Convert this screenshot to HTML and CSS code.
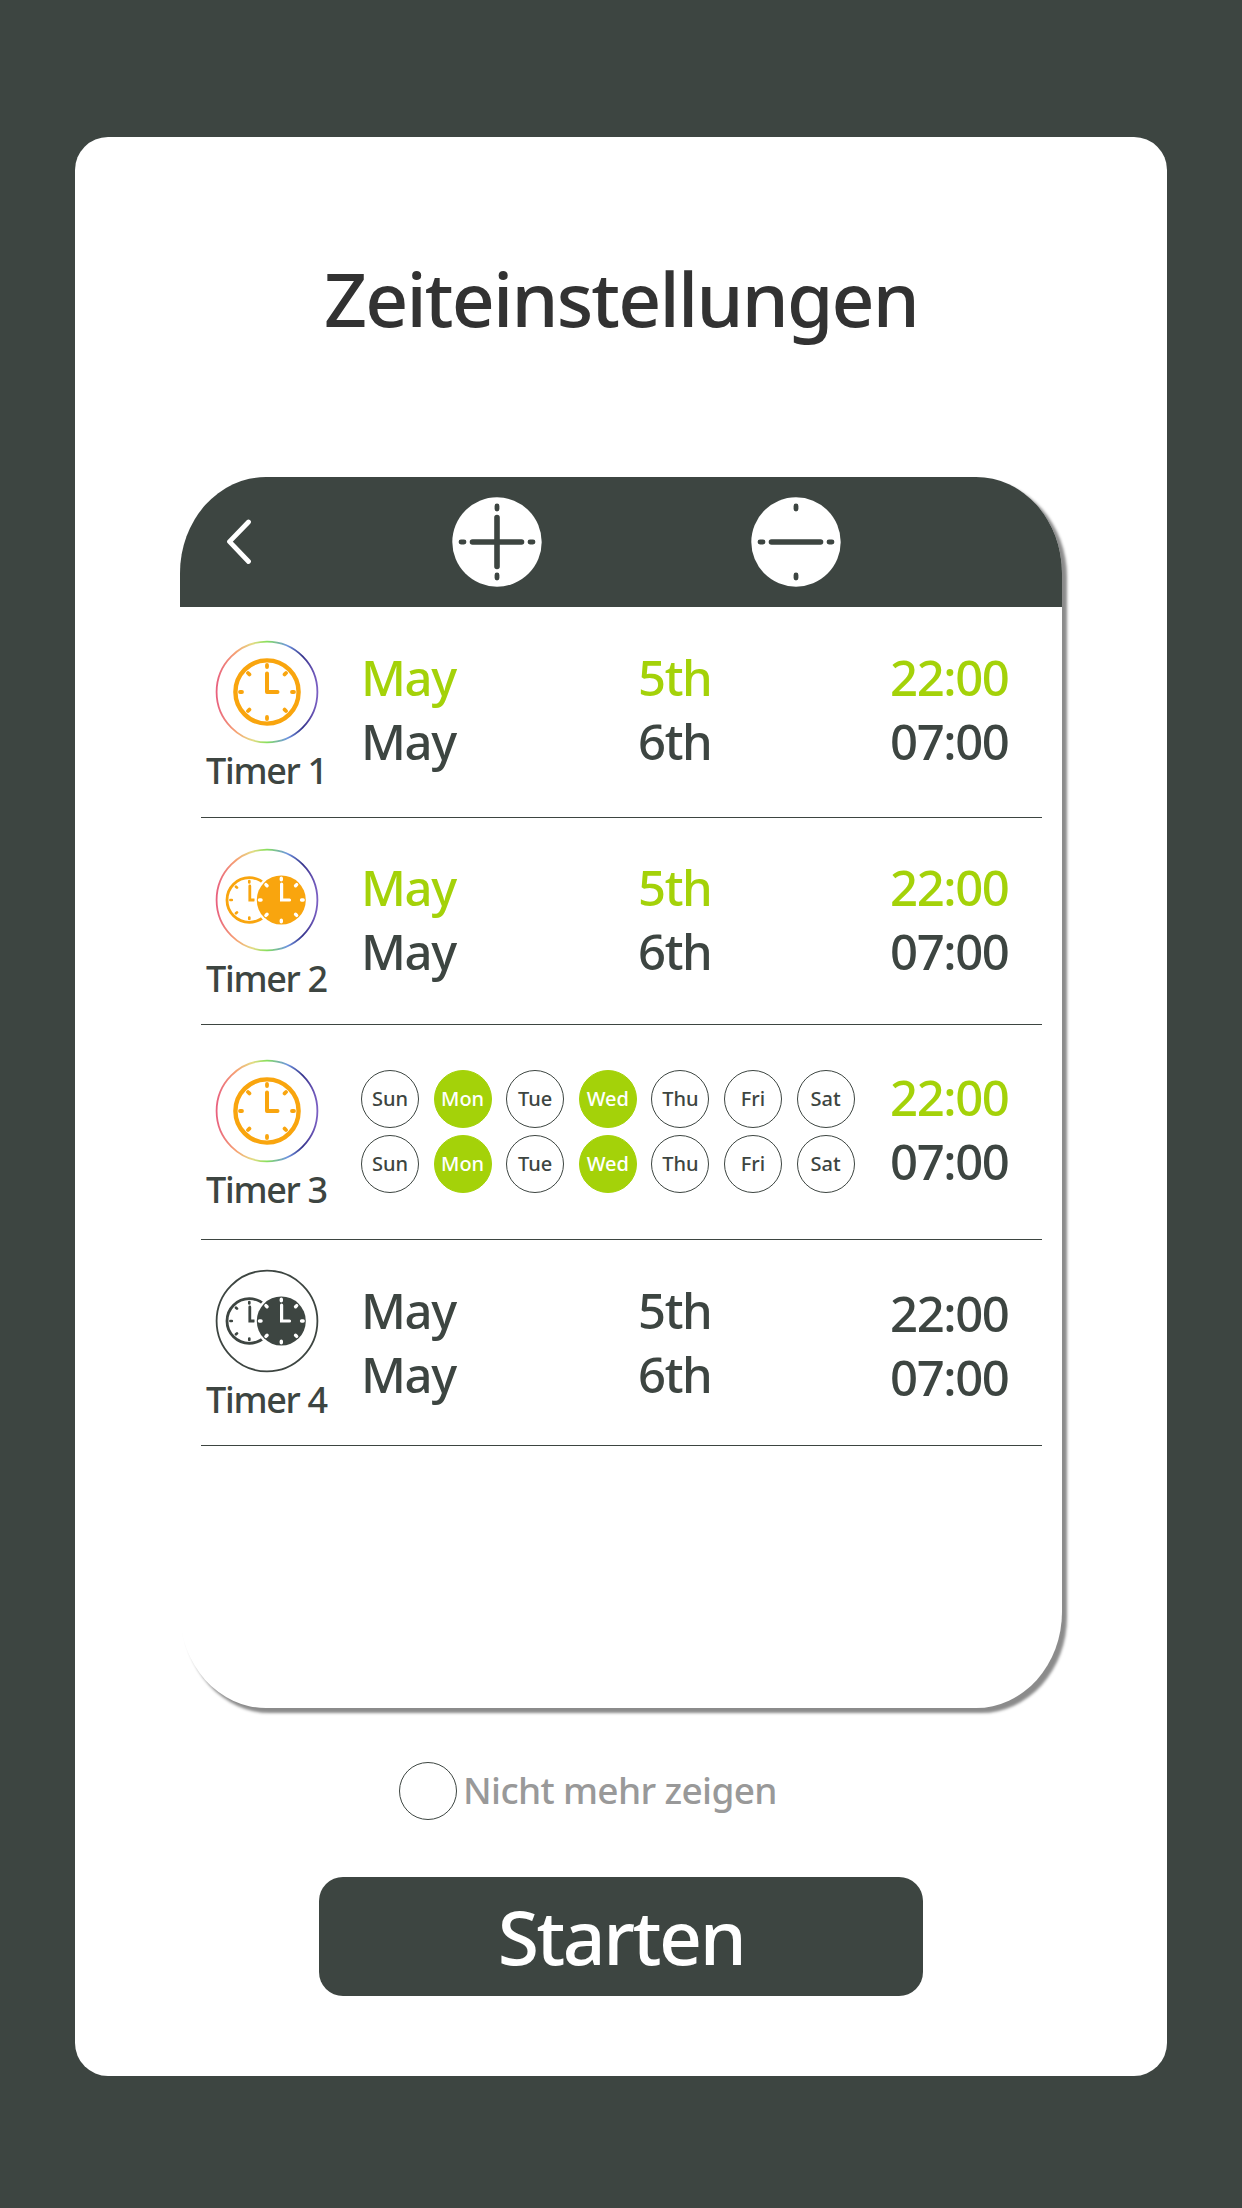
FILE: index.html
```html
<!DOCTYPE html>
<html lang="de">
  <head>
    <meta charset="UTF-8" />
    <meta name="viewport" content="width=device-width, initial-scale=1.0" />
    <title>Zeiteinstellungen</title>
    <link rel="stylesheet" href="styles.css">
  </head>
  <body>
    <!-- shared icons -->
    <svg class="defs" width="0" height="0">
      <defs>
        <linearGradient id="rainbow" gradientUnits="userSpaceOnUse" x1="-51" y1="0" x2="51" y2="0">
          <stop offset="0" stop-color="#e8607f" />
          <stop offset="0.2" stop-color="#f6a373" />
          <stop offset="0.36" stop-color="#e4dc86" />
          <stop offset="0.5" stop-color="#86e05c" />
          <stop offset="0.7" stop-color="#6f95e0" />
          <stop offset="0.85" stop-color="#36348c" />
          <stop offset="1" stop-color="#7c60c4" />
        </linearGradient>
        <g id="ticks" stroke-linecap="round">
          <path d="M0 -27V-25M0 27V25M-27 0H-25M27 0H25M-19 -19L-17.6 -17.6M19 -19L17.6 -17.6M-19 19L-17.6 17.6M19 19L17.6 17.6" />
        </g>
        <symbol id="clock" viewBox="-52 -52 104 104">
          <circle r="31.6" fill="none" stroke="currentColor" stroke-width="4.4" />
          <use href="#ticks" stroke="currentColor" stroke-width="3.8" />
          <path d="M0 -18.5V0H10.5" fill="none" stroke="currentColor" stroke-width="4" stroke-linecap="round" stroke-linejoin="round" />
        </symbol>
        <symbol id="clocks" viewBox="-52 -52 104 104">
          <circle cx="-17.7" r="22.3" fill="none" stroke="currentColor" stroke-width="2.8" />
          <g transform="translate(-17.7 0) scale(0.7)">
            <use href="#ticks" stroke="currentColor" stroke-width="3.8" />
          </g>
          <path d="M-17.2 -14V0H-13" fill="none" stroke="currentColor" stroke-width="2.8" stroke-linecap="round" />
          <circle cx="14.3" r="26.8" fill="#fff" />
          <circle cx="14.3" r="24.5" fill="currentColor" />
          <g transform="translate(14.3 0) scale(0.81)">
            <use href="#ticks" stroke="#fff" stroke-width="4.2" />
          </g>
          <path d="M14.6 -16V0H22.5" fill="none" stroke="#fff" stroke-width="3.2" stroke-linecap="round" />
        </symbol>
      </defs>
    </svg>

    <main class="card">
      <h1>Zeiteinstellungen</h1>

      <section class="panel">
        <header class="bar">
          <svg class="back" viewBox="0 0 26 46">
            <path d="M22.5 3L3.5 22.7L22.5 42.5" />
          </svg>
          <svg class="round add" viewBox="-45 -45 90 90">
            <circle r="44.7" />
            <path class="hand" d="M-24.5 0H24.5M0 -24.5V24.5" />
            <path class="mark" d="M-36 0H-33M36 0H33M0 -36V-33M0 36V33" />
          </svg>
          <svg class="round remove" viewBox="-45 -45 90 90">
            <circle r="44.7" />
            <path class="hand" d="M-24.5 0H24.5" />
            <path class="mark" d="M-36 0H-33M36 0H33M0 -36V-33M0 36V33" />
          </svg>
        </header>

        <div class="timer timer-1">
          <div class="label">
            <svg class="icon" viewBox="-52 -52 104 104">
              <circle class="ring" r="50.4" />
              <use href="#clock" x="-52" y="-52" width="104" height="104" />
            </svg>
            <span>Timer 1</span>
          </div>
          <div class="month"><p class="on">May</p><p>May</p></div>
          <div class="day"><p class="on">5th</p><p>6th</p></div>
          <div class="time"><p class="on">22:00</p><p>07:00</p></div>
        </div>

        <div class="timer timer-2">
          <div class="label">
            <svg class="icon" viewBox="-52 -52 104 104">
              <circle class="ring" r="50.4" />
              <use href="#clocks" x="-52" y="-52" width="104" height="104" />
            </svg>
            <span>Timer 2</span>
          </div>
          <div class="month"><p class="on">May</p><p>May</p></div>
          <div class="day"><p class="on">5th</p><p>6th</p></div>
          <div class="time"><p class="on">22:00</p><p>07:00</p></div>
        </div>

        <div class="timer timer-3">
          <div class="label">
            <svg class="icon" viewBox="-52 -52 104 104">
              <circle class="ring" r="50.4" />
              <use href="#clock" x="-52" y="-52" width="104" height="104" />
            </svg>
            <span>Timer 3</span>
          </div>
          <div class="week">
            <span>Sun</span><span class="picked">Mon</span><span>Tue</span><span class="picked">Wed</span><span>Thu</span><span>Fri</span><span>Sat</span>
            <span>Sun</span><span class="picked">Mon</span><span>Tue</span><span class="picked">Wed</span><span>Thu</span><span>Fri</span><span>Sat</span>
          </div>
          <div class="time"><p class="on">22:00</p><p>07:00</p></div>
        </div>

        <div class="timer timer-4 off">
          <div class="label">
            <svg class="icon" viewBox="-52 -52 104 104">
              <circle class="ring" r="50.4" />
              <use href="#clocks" x="-52" y="-52" width="104" height="104" />
            </svg>
            <span>Timer 4</span>
          </div>
          <div class="month"><p>May</p><p>May</p></div>
          <div class="day"><p>5th</p><p>6th</p></div>
          <div class="time"><p>22:00</p><p>07:00</p></div>
        </div>
      </section>

      <label class="hide-again">
        <input type="checkbox" />
        <span>Nicht mehr zeigen</span>
      </label>

      <button class="start">Starten</button>
    </main>
  </body>
</html>
```
FILE: styles.css
```css
* {
  box-sizing: border-box;
}

body {
  margin: 0;
  height: 2208px;
  padding: 137px 75px 0;
  background-color: #3d4541;
  color: #3d4541;
  font-family: "Noto Sans", "Open Sans", sans-serif;
  font-weight: 500;
}

p {
  margin: 0;
}

.defs {
  position: absolute;
}

.card {
  display: flex;
  flex-direction: column;
  height: 1939px;
  border-radius: 33px;
  background-color: #fff;
}

h1 {
  margin: 111px 0 0;
  height: 229px;
  line-height: 100px;
  font-size: 75px;
  font-weight: 500;
  letter-spacing: -1.8px;
  text-align: center;
  color: #323232;
}

/* timer list */
.panel {
  width: 882px;
  height: 1231px;
  margin-left: 105px;
  border-radius: 86px / 96px;
  background-color: #fff;
  box-shadow: 4.5px 4.5px 3px #8b8b8b;
}

.bar {
  display: flex;
  align-items: center;
  height: 129.5px;
  padding-left: 46px;
  border-radius: 86px 86px 0 0 / 96px 96px 0 0;
  background-color: #3d4541;
}

.back {
  width: 26px;
  height: 46px;
  fill: none;
  stroke: #fff;
  stroke-width: 4.8;
  stroke-linecap: round;
  stroke-linejoin: round;
}

.round {
  width: 90px;
  height: 90px;
  fill: #fff;
  stroke-linecap: round;
}

.add {
  margin-left: 200px;
}

.remove {
  margin-left: 209px;
}

.hand {
  stroke: #3d4541;
  stroke-width: 5.6;
}

.mark {
  stroke: #3d4541;
  stroke-width: 4.8;
}

.timer {
  display: grid;
  grid-template-columns: 161px 276px 252px 152px;
  margin: 0 20px 0 21px;
  border-bottom: 1px solid #3d4541;
}

.timer-1 {
  height: 211.5px;
}

.timer-2 {
  height: 207px;
}

.timer-3 {
  height: 215px;
  grid-template-columns: 160px 529px 152px;
}

.timer-4 {
  height: 206px;
}

.label {
  width: 131px;
  padding-top: 33px;
  text-align: center;
  white-space: nowrap;
}

.timer-2 .label {
  padding-top: 30px;
}

.timer-3 .label {
  padding-top: 34px;
}

.off .label {
  padding-top: 29px;
}

.icon {
  display: block;
  width: 104px;
  height: 104px;
  margin: 0 auto 5px;
  color: #f9a50e;
}

.ring {
  fill: none;
  stroke: url(#rainbow);
  stroke-width: 1.8;
}

.off .icon {
  color: #3d4541;
}

.off .ring {
  stroke: #3d4541;
}

.label span {
  display: block;
  font-size: 36px;
  line-height: 44px;
  letter-spacing: -1.3px;
}

.month,
.day,
.time {
  padding-top: 38px;
  font-size: 49px;
  line-height: 64px;
  letter-spacing: -1.4px;
}

.month {
  margin-left: -1px;
}

.timer-2 p:first-child {
  margin-top: -1px;
}

.timer-3 .time {
  padding-top: 40px;
}

.off .time {
  padding-top: 41px;
}

.on {
  color: #a4d209;
}

.week {
  display: grid;
  grid-template-columns: repeat(7, 58px);
  grid-template-rows: 58px 58px;
  gap: 7px 14.6px;
  padding-top: 45px;
}

.week span {
  border: 1.3px solid #3d4541;
  border-radius: 50%;
  font-size: 20px;
  line-height: 56px;
  text-align: center;
}

.week .picked {
  border-color: #a4d209;
  background-color: #a4d209;
  color: #fff;
}

/* footer */
.hide-again {
  display: flex;
  align-items: center;
  height: 58px;
  margin: 54px 0 0 324px;
  font-size: 37px;
  letter-spacing: -0.65px;
  color: #999;
}

.hide-again input {
  appearance: none;
  width: 58px;
  height: 58px;
  margin: 0 6px 0 0;
  border: 1px solid #3d4541;
  border-radius: 50%;
}

.hide-again span {
  padding-bottom: 4px;
}

.start {
  width: 604px;
  height: 119px;
  margin: 57px 0 0 244px;
  padding: 0;
  border: 0;
  border-radius: 24px;
  background-color: #3d4541;
  color: #fff;
  font-family: inherit;
  font-size: 75px;
  font-weight: 500;
  line-height: 117px;
  letter-spacing: -2.4px;
}
```
